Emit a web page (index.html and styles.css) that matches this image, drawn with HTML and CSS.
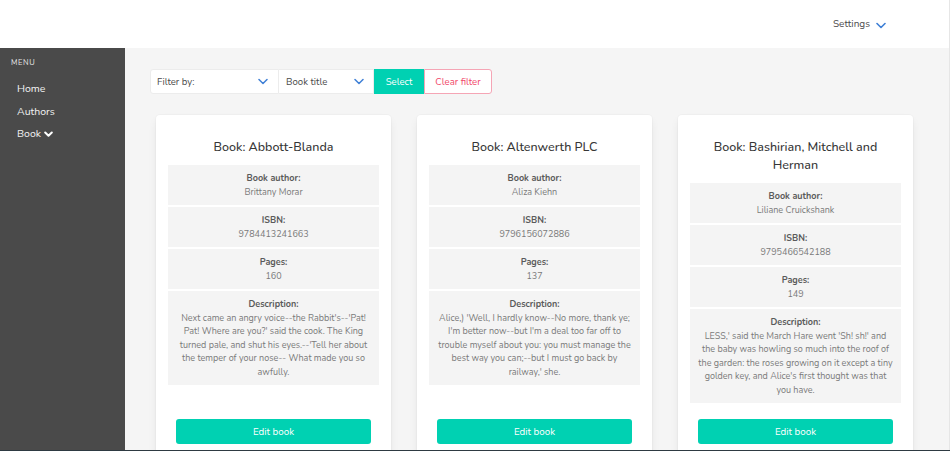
FILE: index.html
```html
<!DOCTYPE html>
<html lang="en">
<head>
<meta charset="utf-8">
<title>Books</title>
<link rel="stylesheet" href="styles.css">
</head>
<body>
<header class="topbar">
  <div class="settings">Settings
    <svg class="chev" width="10" height="7" viewBox="0 0 10 7"><path d="M1 1.5 L5 5.5 L9 1.5" fill="none" stroke="#3e7fd6" stroke-width="1.6" stroke-linecap="round" stroke-linejoin="round"/></svg>
  </div>
</header>
<div class="layout">
  <aside class="sidebar">
    <p class="menu-label">MENU</p>
    <ul class="menu-list">
      <li>Home</li>
      <li>Authors</li>
      <li>Book <svg width="9" height="7" viewBox="0 0 9 7"><path d="M1.2 1.5 L4.5 4.8 L7.8 1.5" fill="none" stroke="#fff" stroke-width="2" stroke-linecap="round" stroke-linejoin="round"/></svg></li>
    </ul>
  </aside>
  <main class="main">
    <div class="filters">
      <div class="select sel1">Filter by:
        <svg class="chev" width="10" height="7" viewBox="0 0 10 7"><path d="M1 1.5 L5 5.5 L9 1.5" fill="none" stroke="#3e7fd6" stroke-width="1.5" stroke-linecap="round" stroke-linejoin="round"/></svg>
      </div>
      <div class="select sel2">Book title
        <svg class="chev" width="10" height="7" viewBox="0 0 10 7"><path d="M1 1.5 L5 5.5 L9 1.5" fill="none" stroke="#3e7fd6" stroke-width="1.5" stroke-linecap="round" stroke-linejoin="round"/></svg>
      </div>
      <button class="btn-select">Select</button>
      <button class="btn-clear">Clear filter</button>
    </div>
    <div class="cards">
      <div class="card">
        <h2 class="card-title">Book: Abbott-Blanda</h2>
        <div class="info">
          <div class="row"><div class="lbl">Book author:</div><div class="val">Brittany Morar</div></div>
          <div class="row"><div class="lbl">ISBN:</div><div class="val">9784413241663</div></div>
          <div class="row"><div class="lbl">Pages:</div><div class="val">160</div></div>
          <div class="row"><div class="lbl">Description:</div><div class="val">Next came an angry voice--the Rabbit's--'Pat! Pat! Where are you?' said the cook. The King turned pale, and shut his eyes.--'Tell her about the temper of your nose-- What made you so awfully.</div></div>
        </div>
        <div class="card-foot"><button class="btn-edit">Edit book</button></div>
      </div>
      <div class="card">
        <h2 class="card-title">Book: Altenwerth PLC</h2>
        <div class="info">
          <div class="row"><div class="lbl">Book author:</div><div class="val">Aliza Kiehn</div></div>
          <div class="row"><div class="lbl">ISBN:</div><div class="val">9796156072886</div></div>
          <div class="row"><div class="lbl">Pages:</div><div class="val">137</div></div>
          <div class="row"><div class="lbl">Description:</div><div class="val">Alice,) 'Well, I hardly know--No more, thank ye; I'm better now--but I'm a deal too far off to trouble myself about you: you must manage the best way you can;--but I must go back by railway,' she.</div></div>
        </div>
        <div class="card-foot"><button class="btn-edit">Edit book</button></div>
      </div>
      <div class="card">
        <h2 class="card-title">Book: Bashirian, Mitchell and Herman</h2>
        <div class="info">
          <div class="row"><div class="lbl">Book author:</div><div class="val">Liliane Cruickshank</div></div>
          <div class="row"><div class="lbl">ISBN:</div><div class="val">9795466542188</div></div>
          <div class="row"><div class="lbl">Pages:</div><div class="val">149</div></div>
          <div class="row"><div class="lbl">Description:</div><div class="val">LESS,' said the March Hare went 'Sh! sh!' and the baby was howling so much into the roof of the garden: the roses growing on it except a tiny golden key, and Alice's first thought was that you have.</div></div>
        </div>
        <div class="card-foot"><button class="btn-edit">Edit book</button></div>
      </div>
    </div>
  </main>
</div>
<div class="bottom-line"></div>
</body>
</html>
```

FILE: styles.css
```css
* { box-sizing: border-box; }
html, body { margin: 0; padding: 0; height: 100%; overflow: hidden; }
body {
  font-family: "Nunito", "Lato", "Open Sans", sans-serif;
  color: #4a4a4a;
  background: #f5f5f5;
  font-size: 9.6px;
  border-right: 1px solid #e6e6e6;
}
.topbar {
  height: 48px;
  background: #fff;
  display: flex;
  justify-content: flex-end;
  align-items: center;
  padding-right: 63px;
}
.settings {
  font-size: 10px;
  color: #4a4a4a;
  display: flex;
  align-items: center;
  gap: 6px;
  margin-top: -1px;
}
.settings .chev { margin-top: 3px; }
.layout {
  display: flex;
  height: calc(100% - 48px);
}
.sidebar {
  width: 125px;
  flex: none;
  background: #4a4a4a;
  padding: 9px 0 0 11px;
}
.menu-label {
  margin: 0 0 10px;
  font-size: 7.5px;
  letter-spacing: 0.6px;
  color: #e6e6e6;
}
.menu-list {
  list-style: none;
  margin: 0;
  padding: 0 0 0 6px;
}
.menu-list li {
  color: #f2f2f2;
  font-size: 10.5px;
  line-height: 22.5px;
  display: flex;
  align-items: center;
  gap: 3px;
}
.main {
  flex: 1;
  padding: 21px 25px 0;
}
.filters {
  display: flex;
  height: 25px;
}
.select {
  background: #fff;
  border: 1px solid #ececec;
  display: flex;
  align-items: center;
  justify-content: space-between;
  font-size: 9.6px;
  color: #4a4a4a;
}
.sel1 { width: 129px; padding: 0 10px 0 6px; border-radius: 3px 0 0 3px; }
.sel2 { width: 95px; padding: 0 9px 0 7px; border-left: none; }
.btn-select {
  width: 50px;
  border: none;
  background: #00d1b2;
  color: #fff;
  font: inherit;
  font-size: 9.6px;
  padding: 0;
}
.btn-clear {
  width: 68px;
  border: 1px solid #f5a5b5;
  border-radius: 0 3px 3px 0;
  background: #fff;
  color: #f14668;
  font: inherit;
  font-size: 9.6px;
  padding: 0;
}
.cards {
  display: grid;
  grid-template-columns: repeat(3, 235px);
  column-gap: 26px;
  margin: 21px 0 0 6px;
}
.card {
  background: #fff;
  border-radius: 4px;
  box-shadow: 0 5px 10px -1px rgba(10,10,10,0.08), 0 0 0 1px rgba(10,10,10,0.02);
  padding: 23px 12px 0;
  display: flex;
  flex-direction: column;
}
.card-title {
  margin: 0 0 9px;
  font-size: 12.5px;
  line-height: 18px;
  font-weight: 500;
  color: #363636;
  text-align: center;
  padding: 0 14px;
}
.info {
  display: flex;
  flex-direction: column;
  gap: 2px;
}
.row {
  background: #f4f4f4;
  text-align: center;
  padding: 7px 8px 6px;
  font-size: 9px;
  line-height: 13.5px;
}
.lbl { font-weight: 700; color: #5a5a5a; }
.val { color: #7a7a7a; }
.card-foot {
  margin-top: auto;
  padding: 16px 8px 24px;
}
.btn-edit {
  display: block;
  width: 100%;
  height: 25px;
  border: none;
  border-radius: 3px;
  background: #00d1b2;
  color: #fff;
  font: inherit;
  font-size: 9.8px;
}
.bottom-line {
  position: fixed;
  left: 0;
  right: 0;
  bottom: 0;
  height: 1px;
  background: #2e3a42;
}
```
